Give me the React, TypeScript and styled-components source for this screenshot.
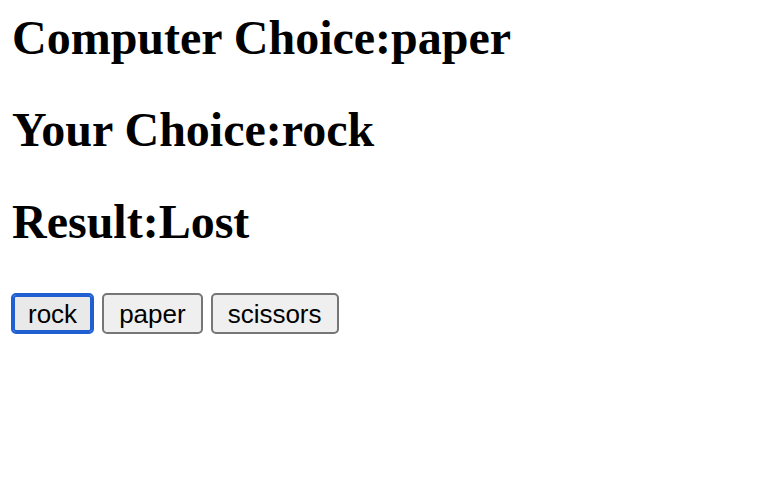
import React from "react";
import styled, { createGlobalStyle } from "styled-components";

const Global = createGlobalStyle`
  html, body { margin: 0; padding: 0; background: #ffffff; }
`;

const Page = styled.div`
  display: flex;
  flex-direction: column;
  padding: 10px 0 0 11px;
  font-family: "Liberation Serif", "Times New Roman", serif;
  color: #000;
`;

const Heading = styled.h2`
  margin: 0 0 37px 1px;
  font-size: 48px;
  line-height: 55px;
  font-weight: 700;
`;

const ButtonRow = styled.div`
  display: flex;
  gap: 8px;
  align-items: center;
  margin-top: 7px;
`;

const ChoiceButton = styled.button<{ $focused?: boolean }>`
  box-sizing: border-box;
  height: 41px;
  padding: 0 15px;
  font-family: "Liberation Sans", Arial, sans-serif;
  font-size: 26px;
  line-height: 30px;
  color: #000;
  background: ${(p) => (p.$focused ? "#e9e9e9" : "#efefef")};
  border: 2px solid ${(p) => (p.$focused ? "#1f5fd1" : "#767676")};
  border-radius: 5px;
  box-shadow: ${(p) => (p.$focused ? "inset 0 0 0 2px #1f5fd1" : "none")};
  outline: none;
  cursor: pointer;
`;

const choices = ["rock", "paper", "scissors"];

export default function App() {
  return (
    <>
      <Global />
      <Page>
        <Heading>Computer Choice:paper</Heading>
        <Heading>Your Choice:rock</Heading>
        <Heading>Result:Lost</Heading>
        <ButtonRow>
          {choices.map((c) => (
            <ChoiceButton key={c} $focused={c === "rock"}>
              {c}
            </ChoiceButton>
          ))}
        </ButtonRow>
      </Page>
    </>
  );
}
